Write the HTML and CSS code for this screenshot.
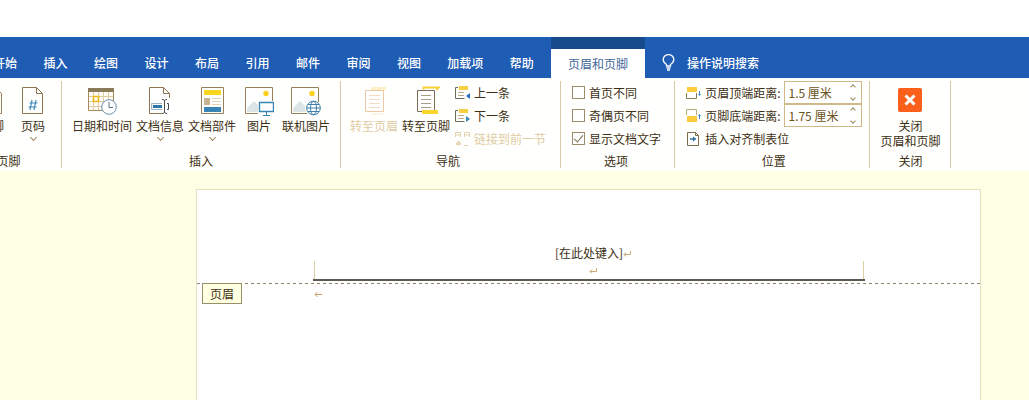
FILE: index.html
```html
<!DOCTYPE html>
<html lang="zh-CN">
<head>
    <meta charset="UTF-8">
    <meta name="viewport" content="width=device-width, initial-scale=1.0">
    <title>页眉和页脚</title>
    <link rel="stylesheet" href="styles.css">
</head>
<body>
    <div class="titlebar"></div>

    <!-- 选项卡 -->
    <nav class="tabs">
        <div class="tab-list">
            <button>开始</button>
            <button>插入</button>
            <button>绘图</button>
            <button>设计</button>
            <button>布局</button>
            <button>引用</button>
            <button>邮件</button>
            <button>审阅</button>
            <button>视图</button>
            <button>加载项</button>
            <button>帮助</button>
        </div>
        <button class="active">页眉和页脚</button>
        <button class="tell-me">
            <svg width="13" height="17" viewBox="0 0 13 17" fill="none" stroke="#fff" stroke-width="1.3">
                <path d="M4.500 12V10.500C3 9.500 1.200 8 1.200 5.600a5.300 5 0 0 1 10.600 0C11.800 8 10 9.500 8.500 10.500V12zM4.500 14h4M5 16h3"/>
            </svg>
            操作说明搜索
        </button>
    </nav>

    <div class="ribbon">
        <!-- 页眉和页脚 -->
        <section class="group group-hf">
            <div class="commands">
                <button class="big">
                    <svg width="30" height="30" viewBox="0 0 30 30" fill="none" stroke="#9a8058"><path d="M4.500 1.500h14l6 6v20h-20z"/></svg>
                    页脚
                </button>
                <button class="big">
                    <svg width="30" height="30" viewBox="0 0 30 30" fill="none" stroke="#8f7550">
                        <path d="M4.500 1.500h14l6 6v20h-20zM18.500 1.500v6h6"/>
                        <path d="M14 14l-2 10M18 14l-2 10M11.500 17h8M10.500 21h8" stroke="#3a86b8" stroke-width="1.200"/>
                    </svg>
                    页码
                    <span class="chevron"></span>
                </button>
            </div>
            <div class="group-label">页眉和页脚</div>
        </section>

        <!-- 插入 -->
        <section class="group group-insert">
            <div class="commands">
                <button class="big">
                    <svg width="30" height="30" viewBox="0 0 30 30" fill="none">
                        <path d="M1.500 2.500h25v22h-25z" fill="#fffdf5" stroke="#a58a5c"/>
                        <path d="M1 2h26v4H1z" fill="#8a7a58"/>
                        <path d="M6.500 6v18M11.500 6v18M16.500 6v18M21.500 6v18M2 10.500h24M2 15.500h24M2 20.500h24" stroke="#dccba6"/>
                        <path d="M6.500 10.500h5v5h-5z" stroke="#eeb81c" stroke-width="1.600"/>
                        <circle cx="22" cy="21" r="7.300" fill="#fff" stroke="#6c8fae"/>
                        <path d="M22 16v5.500h4" stroke="#56708c"/>
                    </svg>
                    日期和时间
                </button>
                <button class="big">
                    <svg width="30" height="30" viewBox="0 0 30 30" fill="none" stroke="#8f7550">
                        <path d="M4.500 1.500h14l6 6v20h-20zM18.500 1.500v6h6" fill="#fff"/>
                        <path d="M6.500 17.500h12v6h-12z" fill="#fff" stroke="#9fb3c0"/>
                        <path d="M8 19h9v3H8z" fill="#2e75a8" stroke="none"/>
                        <path d="M17 12h9v17h-9z" fill="#fff" stroke="none"/>
                        <path d="M19.500 14v13M17 13.500c1.500 0 2.500.5 2.500 1.500 0-1 1-1.500 2.500-1.500M17 27.500c1.500 0 2.500-.5 2.500-1.500 0 1 1 1.500 2.500 1.500M22 17.500h1.500v6H22" stroke="#4c4c4c"/>
                    </svg>
                    文档信息
                    <span class="chevron"></span>
                </button>
                <button class="big">
                    <svg width="30" height="30" viewBox="0 0 30 30" fill="none">
                        <path d="M4.500 1.500h22v26h-22z" fill="#fff" stroke="#9a8058"/>
                        <path d="M7 4h17v5H7z" fill="#fbd51e"/>
                        <path d="M7 12h6v7H7z" fill="#c4b494"/>
                        <path d="M15 12.500h9M15 15.500h9M15 18.500h9" stroke="#dfd2b4"/>
                        <path d="M7 21h17v5H7z" fill="#3885b5"/>
                    </svg>
                    文档部件
                    <span class="chevron"></span>
                </button>
                <button class="big picture">
                    <svg width="30" height="30" viewBox="0 0 30 30" fill="none">
                        <path d="M1.500 1.500h27v26h-27z" fill="#fff" stroke="#9a8058"/>
                        <path d="M3 26V22l7-7 6 6v5z" fill="#dbe5e6"/>
                        <circle cx="22" cy="7.500" r="2.700" fill="#f8d01c"/>
                        <path d="M14 15h16v15H14z" fill="#fff"/>
                        <path d="M15.500 16.500h14v9h-14z" stroke="#3885b5" stroke-width="1.400"/>
                        <path d="M22.500 26v3M19 29.500h7" stroke="#3885b5"/>
                    </svg>
                    图片
                </button>
                <button class="big">
                    <svg width="30" height="30" viewBox="0 0 30 30" fill="none">
                        <path d="M.5 1.500h27v26H.5z" fill="#fff" stroke="#9a8058"/>
                        <path d="M2 26V22l7-7 6 6v5z" fill="#dbe5e6"/>
                        <circle cx="21" cy="7.500" r="2.700" fill="#f8d01c"/>
                        <circle cx="22" cy="22" r="8" fill="#fff"/>
                        <circle cx="22.500" cy="22" r="6.800" stroke="#3f7fa8"/>
                        <ellipse cx="22.500" cy="22" rx="3" ry="6.800" stroke="#3f7fa8"/>
                        <path d="M15.500 22h14M17 18.500h11M17 25.500h11" stroke="#3f7fa8"/>
                    </svg>
                    联机图片
                </button>
            </div>
            <div class="group-label">插入</div>
        </section>

        <!-- 导航 -->
        <section class="group group-nav">
            <div class="commands">
                <button class="big" disabled>
                    <svg width="30" height="30" viewBox="0 0 30 30" fill="none">
                        <path d="M12 1h15v3H12z" fill="#fdf0c8"/>
                        <path d="M6.500 4.500h18v21h-18z" fill="#fff" stroke="#ecc9a4"/>
                        <path d="M10 9.500h11M10 13.500h11M10 17.500h11M10 21.500h11" stroke="#f0dcc0"/>
                        <path d="M12 27h14v2H12z" fill="#fdf6e4"/>
                    </svg>
                    转至页眉
                </button>
                <button class="big">
                    <svg width="30" height="30" viewBox="0 0 30 30" fill="none">
                        <path d="M12.500 3.500V1.500h15l-2 2.500" stroke="#f4d233" stroke-width="2"/>
                        <path d="M6.500 4.500h17v21h-17z" fill="#fff" stroke="#7d6d55"/>
                        <path d="M10 9.500h10M10 13.500h10M10 17.500h10M10 21.500h10" stroke="#a89c88"/>
                        <path d="M11 24h16v4H11z" fill="#fad52a"/>
                    </svg>
                    转至页脚
                </button>
                <div class="rows">
                    <button class="small">
                        <svg width="15" height="16" viewBox="0 0 15 16" fill="none">
                            <path d="M3 2.500H.5v11h9" stroke="#6f6a58"/>
                            <path d="M4 1h9v4H4z" fill="#f8cf42"/>
                            <path d="M3 7.500h6M3 10.500h6" stroke="#b9aa88"/>
                            <path d="M15 8v6l-4-3z" fill="#2c6dbb"/>
                        </svg>
                        上一条
                    </button>
                    <button class="small">
                        <svg width="15" height="16" viewBox="0 0 15 16" fill="none">
                            <path d="M3 2.500H.5v11h9" stroke="#6f6a58"/>
                            <path d="M4 1h9v4H4z" fill="#f8cf42"/>
                            <path d="M3 7.500h6M3 10.500h6" stroke="#b9aa88"/>
                            <path d="M11 8v6l4-3z" fill="#3c86b4"/>
                        </svg>
                        下一条
                    </button>
                    <button class="small" disabled>
                        <svg width="15" height="16" viewBox="0 0 15 16" fill="none" stroke="#e3d2b0">
                            <path d="M.5 6V1.500h5V6M9.500 6V1.500h5V6M.5 4h5M9.500 4h5M9 14.500h4"/>
                            <path d="M1 13l2.500-3L6 13l-2.500 1z" fill="#e6d8b8"/>
                        </svg>
                        链接到前一节
                    </button>
                </div>
            </div>
            <div class="group-label">导航</div>
        </section>

        <!-- 选项 -->
        <section class="group group-options">
            <div class="commands">
                <div class="rows">
                    <label class="check"><input type="checkbox">首页不同</label>
                    <label class="check"><input type="checkbox">奇偶页不同</label>
                    <label class="check"><input type="checkbox" checked>显示文档文字</label>
                </div>
            </div>
            <div class="group-label">选项</div>
        </section>

        <!-- 位置 -->
        <section class="group group-position">
            <div class="commands">
                <div class="rows">
                    <div class="field">
                        <svg width="15" height="16" viewBox="0 0 15 16" fill="none">
                            <path d="M1 2h10v5H1z" fill="#fbcb3e"/>
                            <path d="M.5 8v5.500h10V8" stroke="#8a7a58"/>
                            <path d="M13.500 6v4" stroke="#3885b5"/><path d="M12 9h3l-1.500 2z" fill="#3885b5"/>
                        </svg>
                        <label for="headerTop">页眉顶端距离:</label>
                        <div class="spinner">
                            <input type="text" id="headerTop" value="1.5 厘米">
                            <div class="arrows"><span class="chevron up"></span><span class="chevron"></span></div>
                        </div>
                    </div>
                    <div class="field">
                        <svg width="15" height="16" viewBox="0 0 15 16" fill="none">
                            <path d="M.5 7V1.500h10V7" stroke="#b8a880"/>
                            <path d="M1 8h10v6H1z" fill="#fbcb3e"/>
                            <path d="M13.500 7v4" stroke="#3885b5"/><path d="M12 8h3l-1.500-2z" fill="#3885b5"/>
                        </svg>
                        <label for="footerBottom">页脚底端距离:</label>
                        <div class="spinner">
                            <input type="text" id="footerBottom" value="1.75 厘米">
                            <div class="arrows"><span class="chevron up"></span><span class="chevron"></span></div>
                        </div>
                    </div>
                    <button class="small">
                        <svg width="15" height="16" viewBox="0 0 15 16" fill="none">
                            <path d="M1.500 1.500h8l3 3v10h-11zM9.500 1.500v3h3" fill="#fff" stroke="#7d6a48"/>
                            <path d="M4 8h4" stroke="#2e75a8" stroke-width="1.500"/><path d="M7 5.500v5L10.500 8z" fill="#2e75a8"/>
                        </svg>
                        插入对齐制表位
                    </button>
                </div>
            </div>
            <div class="group-label">位置</div>
        </section>

        <!-- 关闭 -->
        <section class="group group-close">
            <div class="commands">
                <button class="big">
                    <svg width="30" height="30" viewBox="0 0 30 30" fill="none">
                        <rect x="3" y="2" width="24" height="24" rx="2" fill="#fb5f1c"/>
                        <path d="M10.500 9.500l9 9M19.500 9.500l-9 9" stroke="#fff" stroke-width="3"/>
                    </svg>
                    关闭<br>页眉和页脚
                </button>
            </div>
            <div class="group-label">关闭</div>
        </section>
    </div>

    <!-- 文档 -->
    <main class="workspace">
        <div class="page">
            <div class="page-header">
                <div class="header-text">
                    <p>[在此处键入]<span class="mark"><svg width="8" height="8" viewBox="0 0 8 8" fill="none" stroke="#c9ad78"><path d="M7.500 1v3.500H1M3 2.500l-2 2 2 2"/></svg></span></p>
                    <p><span class="mark"><svg width="8" height="8" viewBox="0 0 8 8" fill="none" stroke="#c9ad78"><path d="M7.500 1v3.500H1M3 2.500l-2 2 2 2"/></svg></span></p>
                </div>
                <span class="header-tag">页眉</span>
            </div>
            <div class="page-body">
                <svg width="9" height="8" viewBox="0 0 9 8" fill="none" stroke="#c9a070"><path d="M8 4.500H1M3.500 2L1 4.500 3.500 7"/></svg>
            </div>
        </div>
    </main>
</body>
</html>
```

FILE: styles.css
```css
* {
    box-sizing: border-box;
}
body {
    margin: 0;
    min-height: 100vh;
    display: flex;
    flex-direction: column;
    overflow: hidden;
    background-color: #ffffe6;
    color: #3d2f14;
    font-family: "Noto Sans CJK SC", sans-serif;
    font-size: 12px;
    line-height: 15px;
}
button {
    padding: 0;
    border: none;
    background: none;
    color: inherit;
    font: inherit;
    white-space: nowrap;
    cursor: pointer;
}
button:disabled {
    color: #e0cba4;
    cursor: default;
}
svg {
    display: block;
    flex: none;
}
.titlebar {
    height: 37px;
    background-color: #fff;
}

/* 选项卡 */
.tabs {
    display: flex;
    height: 41px;
    background-color: #1f5db5;
    color: #fff;
    font-weight: 500;
}
.tabs button {
    padding-top: 10px;
}
.tab-list {
    display: flex;
    flex: none;
    justify-content: space-between;
    width: 541px;
    margin-left: -7px;
}
.tabs .active {
    margin-left: 17px;
    padding: 0 17px;
    border-top: 12px solid #154a8c;
    background-color: #fff;
    color: #3f6699;
    font-weight: 400;
}
.tabs .tell-me {
    display: flex;
    align-items: center;
    gap: 12px;
    margin-left: 17px;
}

/* 功能区 */
.ribbon {
    display: flex;
    padding: 3px 0;
    background-color: #fffffd;
}
.group {
    flex: none;
    border-right: 1px solid #d8cba8;
}
.commands {
    display: flex;
    gap: 4px;
    height: 73px;
}
.group-label {
    line-height: 14px;
    text-align: center;
    white-space: nowrap;
}
.group-hf {
    width: 124px;
    margin-left: -62px;
}
.group-hf .commands {
    justify-content: flex-end;
    gap: 11px;
    padding-right: 13px;
}
.group-hf .group-label {
    padding-right: 18px;
}
.group-insert {
    padding: 0 10px;
}
.group-nav {
    padding: 0 14px 0 9px;
}
.group-options {
    padding: 0 13px 0 10px;
}
.group-position {
    padding: 0 7px 0 10px;
}
.group-close {
    padding: 0 10px;
}
.big {
    display: flex;
    flex-direction: column;
    align-items: center;
    padding-top: 5px;
}
.big svg {
    margin-bottom: 2px;
}
.picture {
    padding: 5px 4px 0;
}
.chevron {
    width: 5px;
    height: 5px;
    margin-top: 2px;
    border: solid #a08a60;
    border-width: 0 1px 1px 0;
    transform: rotate(45deg);
}
.rows {
    display: flex;
    flex-direction: column;
    align-items: flex-start;
    margin-left: 1px;
}
.small, .check, .field {
    display: flex;
    align-items: center;
    gap: 4px;
    height: 23px;
    white-space: nowrap;
}
.check input {
    appearance: none;
    display: flex;
    justify-content: center;
    width: 13px;
    height: 13px;
    margin: 0;
    border: 1px solid #9c8c6c;
    background-color: #fff;
}
.check input:checked::before {
    content: "";
    width: 4px;
    height: 8px;
    border: solid #7b6c4c;
    border-width: 0 1px 1px 0;
    transform: rotate(40deg);
}
.spinner {
    display: flex;
    width: 78px;
    height: 23px;
    border: 1px solid #cfb988;
    background-color: #fff;
}
.spinner input {
    flex: 1;
    min-width: 0;
    padding: 0 0 0 3px;
    border: none;
    background: none;
    color: #6b5320;
    font: inherit;
}
.arrows {
    display: flex;
    flex-direction: column;
    align-items: center;
    justify-content: space-around;
    width: 16px;
}
.arrows .chevron {
    width: 4px;
    height: 4px;
    margin-top: 0;
}
.arrows .up {
    transform: rotate(225deg);
}

/* 文档页面 */
.workspace {
    display: flex;
    flex: 1;
    padding: 18px 48px 0 196px;
}
.page {
    flex: 1;
    border: 1px solid #e6dfbc;
    border-bottom: none;
    background-color: #fff;
}
.page-header {
    position: relative;
    padding: 55px 115px 2px 116px;
}
.page-header::after {
    content: "";
    position: absolute;
    left: 0;
    right: 0;
    bottom: -1px;
    height: 1px;
    background: repeating-linear-gradient(to right, #8d8468 0 3px, transparent 3px 6px);
}
.header-text {
    position: relative;
    border-bottom: 2px solid #5c5a52;
    text-align: center;
}
.header-text::after {
    content: "";
    position: absolute;
    left: 1px;
    right: 1px;
    bottom: 0;
    height: 18px;
    border: solid #dccfa4;
    border-width: 0 1px;
}
.header-text p {
    margin: 0;
    height: 17px;
    line-height: 16px;
}
.mark {
    display: inline-block;
    width: 0;
}
.header-tag {
    position: absolute;
    top: 100%;
    left: 5px;
    z-index: 1;
    padding: 2px 7px;
    border: 1px solid #9a9068;
    background-color: #ffffe1;
}
.page-body {
    padding: 7px 117px;
}
```
